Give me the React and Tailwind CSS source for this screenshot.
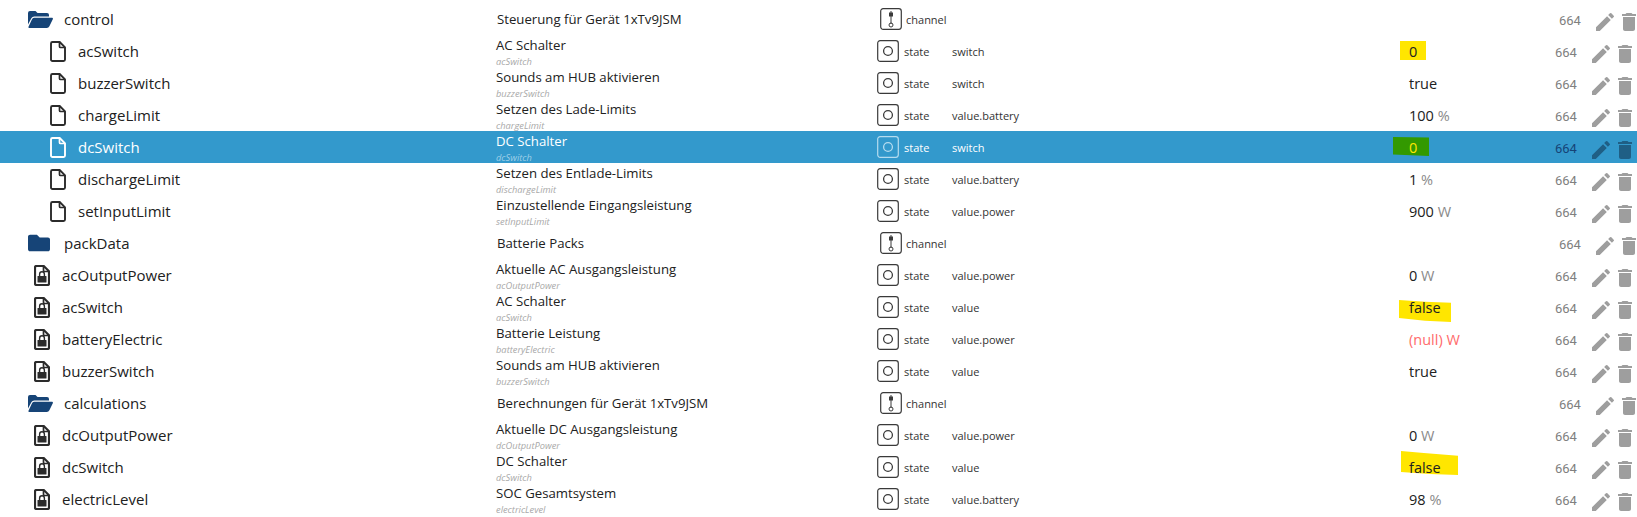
import React from 'react'
import { FaFolder } from 'react-icons/fa'
import { MdEdit, MdDelete } from 'react-icons/md'

const rows = [
  { kind: 'open', name: 'control', desc: 'Steuerung für Gerät 1xTv9JSM' },
  { kind: 'file', name: 'acSwitch', desc: 'AC Schalter', role: 'switch', value: '0', mark: 'yellowBox' },
  { kind: 'file', name: 'buzzerSwitch', desc: 'Sounds am HUB aktivieren', role: 'switch', value: 'true' },
  { kind: 'file', name: 'chargeLimit', desc: 'Setzen des Lade-Limits', role: 'value.battery', value: '100', unit: '%' },
  { kind: 'file', name: 'dcSwitch', desc: 'DC Schalter', role: 'switch', value: '0', mark: 'greenBox', selected: true },
  { kind: 'file', name: 'dischargeLimit', desc: 'Setzen des Entlade-Limits', role: 'value.battery', value: '1', unit: '%' },
  { kind: 'file', name: 'setInputLimit', desc: 'Einzustellende Eingangsleistung', role: 'value.power', value: '900', unit: 'W' },
  { kind: 'closed', name: 'packData', desc: 'Batterie Packs' },
  { kind: 'lock', name: 'acOutputPower', desc: 'Aktuelle AC Ausgangsleistung', role: 'value.power', value: '0', unit: 'W' },
  { kind: 'lock', name: 'acSwitch', desc: 'AC Schalter', role: 'value', value: 'false', mark: 'swipeShort' },
  { kind: 'lock', name: 'batteryElectric', desc: 'Batterie Leistung', role: 'value.power', value: '(null)', unit: 'W', isNull: true },
  { kind: 'lock', name: 'buzzerSwitch', desc: 'Sounds am HUB aktivieren', role: 'value', value: 'true' },
  { kind: 'open', name: 'calculations', desc: 'Berechnungen für Gerät 1xTv9JSM' },
  { kind: 'lock', name: 'dcOutputPower', desc: 'Aktuelle DC Ausgangsleistung', role: 'value.power', value: '0', unit: 'W' },
  { kind: 'lock', name: 'dcSwitch', desc: 'DC Schalter', role: 'value', value: 'false', mark: 'swipeLong' },
  { kind: 'lock', name: 'electricLevel', desc: 'SOC Gesamtsystem', role: 'value.battery', value: '98', unit: '%' },
]

const OpenFolder = ({ className }) => (
  <svg viewBox="0 0 25 17" className={className} fill="currentColor">
    <path d="M0 2a2 2 0 0 1 2-2h5.5l2 2H19a2 2 0 0 1 2 2v1.4H6.2a3 3 0 0 0-2.7 1.7L0 13.5z" />
    <path d="M6 6.8h17.8c.9 0 1.4.8 1 1.5l-3.4 7a3 3 0 0 1-2.6 1.7H1.2c-.7 0-1-.6-.7-1.2L4 8.2a2.3 2.3 0 0 1 2-1.4z" />
  </svg>
)

const FileIcon = ({ locked, className }) => (
  <svg viewBox="0 0 16 21" className={className} fill="none">
    <path d="M2.5 1h7.2L15 6.3V18.5a1.5 1.5 0 0 1-1.5 1.5h-11A1.5 1.5 0 0 1 1 18.5v-16A1.5 1.5 0 0 1 2.5 1z" stroke="currentColor" strokeWidth={locked ? 2.2 : 1.9} />
    <path d="M9.5 1v4.5a1 1 0 0 0 1 1H15" stroke="currentColor" strokeWidth="1.7" />
    {locked && (
      <>
        <rect x="3.5" y="11" width="9" height="6.5" rx="0.6" fill="currentColor" />
        <path d="M5.6 11V9.2a2.4 2.4 0 0 1 4.8 0V11" stroke="currentColor" strokeWidth="1.4" />
      </>
    )}
  </svg>
)

const TypeIcon = ({ channel, className }) => (
  <svg viewBox="0 0 22 22" className={className} fill="none">
    <rect x="0.7" y="0.7" width="20.6" height="20.6" rx="2.5" stroke="currentColor" strokeWidth="1.2" />
    {channel ? (
      <>
        <path d="M11 3v13" stroke="currentColor" strokeWidth="1" />
        <rect x="9" y="4.5" width="4" height="4" fill="currentColor" />
        <circle cx="11" cy="17" r="2" stroke="currentColor" strokeWidth="1" />
      </>
    ) : (
      <circle cx="11" cy="11" r="4.4" stroke="currentColor" strokeWidth="1.3" />
    )}
  </svg>
)

const Mark = ({ type }) => {
  if (type === 'yellowBox') return <span className="absolute left-[-9px] top-[6px] h-[19px] w-[26px] bg-[#ffe600]" />
  if (type === 'greenBox') return <span className="absolute left-[-16px] top-[6px] h-[19px] w-[36px] bg-[#339900] [clip-path:polygon(0_0,100%_3%,100%_100%,0_92%)]" />
  if (type === 'swipeShort') return <span className="absolute left-[-10px] top-[9px] h-[22px] w-[52px] bg-[#ffe600] [clip-path:polygon(0_0,50%_8%,100%_12%,100%_100%,50%_94%,0_82%)]" />
  return <span className="absolute left-[-8px] top-0 h-[24px] w-[57px] bg-[#ffe600] [clip-path:polygon(0_0,40%_8%,100%_20%,100%_100%,50%_96%,0_88%)]" />
}

const Row = ({ row }) => {
  const isFolder = row.kind === 'open' || row.kind === 'closed'
  const sel = row.selected

  return (
    <div className={`flex h-8 items-center ${sel ? 'bg-[#3399cc] text-white' : 'text-[#212121]'}`}>
      {/* name */}
      <div className={`flex shrink-0 items-center ${isFolder ? 'w-[497px] pl-[28px]' : row.kind === 'lock' ? 'w-[496px] pl-[34px]' : 'w-[496px] pl-[50px]'}`}>
        {row.kind === 'open' && <OpenFolder className="mr-[11px] h-[17px] w-[25px] text-[#164477]" />}
        {row.kind === 'closed' && <FaFolder className="mr-[14px] h-[22px] w-[22px] text-[#164477]" />}
        {row.kind === 'file' && <FileIcon className={`mr-[12px] h-[21px] w-[16px] ${sel ? 'text-white' : 'text-[#2b2b2b]'}`} />}
        {row.kind === 'lock' && <FileIcon locked className="mr-[12px] h-[21px] w-[16px] text-[#2b2b2b]" />}
        <span className="text-[15px] leading-5">{row.name}</span>
      </div>

      {/* description */}
      {isFolder ? (
        <div className="w-[383px] shrink-0 text-[13.2px] leading-4">{row.desc}</div>
      ) : (
        <div className="flex h-8 w-[381px] shrink-0 flex-col pt-[2px]">
          <div className="text-[13.2px] leading-4">{row.desc}</div>
          <div className={`mt-[4px] text-[9.3px] italic leading-[9px] ${sel ? 'text-[#9fd0e8]' : 'text-[#a8a8a8]'}`}>{row.name}</div>
        </div>
      )}

      {/* type + role */}
      {isFolder ? (
        <div className="flex w-[529px] shrink-0 items-center">
          <TypeIcon channel className="h-[22px] w-[22px] text-[#3a3a3a]" />
          <span className="ml-[4px] pt-[2px] text-[11px] text-[#333]">channel</span>
        </div>
      ) : (
        <>
          <div className="flex w-[75px] shrink-0 items-center">
            <TypeIcon className={`h-[22px] w-[22px] ${sel ? 'text-[#b5dcef]' : 'text-[#3a3a3a]'}`} />
            <span className={`ml-[5px] pt-[2px] text-[11px] ${sel ? 'text-white' : 'text-[#333]'}`}>state</span>
          </div>
          <div className={`w-[457px] shrink-0 pt-[2px] text-[11px] ${sel ? 'text-white' : 'text-[#333]'}`}>{row.role}</div>
        </>
      )}

      {/* value */}
      <div className={`relative h-8 shrink-0 pt-[1px] ${isFolder ? 'w-[150px]' : 'w-[146px]'}`}>
        {row.mark && <Mark type={row.mark} />}
        {row.value && (
          <span className={`relative text-[14.5px] leading-8 ${row.isNull ? 'text-[#ff6b6b]' : sel ? 'text-[#ffe600]' : ''}`}>
            {row.value}
            {row.unit && <span className={row.isNull ? '' : 'text-[#8a8a8a]'}> {row.unit}</span>}
          </span>
        )}
      </div>

      {/* acl + actions */}
      <div className={`w-[34px] shrink-0 pt-[4px] font-['Roboto',sans-serif] text-[13px] ${sel ? 'text-[#164477]' : 'text-[#808080]'}`}>664</div>
      <MdEdit className={`mt-[5px] h-6 w-6 shrink-0 ${sel ? 'text-[#1f5f85]' : 'text-[#9e9e9e]'}`} />
      <MdDelete className={`mt-[5px] h-6 w-6 shrink-0 ${sel ? 'text-[#1f5f85]' : 'text-[#9e9e9e]'}`} />
    </div>
  )
}

export default function App() {
  return (
    <div className="h-[517px] w-[1637px] overflow-hidden bg-white pt-[3px] font-['Open_Sans',sans-serif]">
      {rows.map((row, i) => (
        <Row key={i} row={row} />
      ))}
    </div>
  )
}
